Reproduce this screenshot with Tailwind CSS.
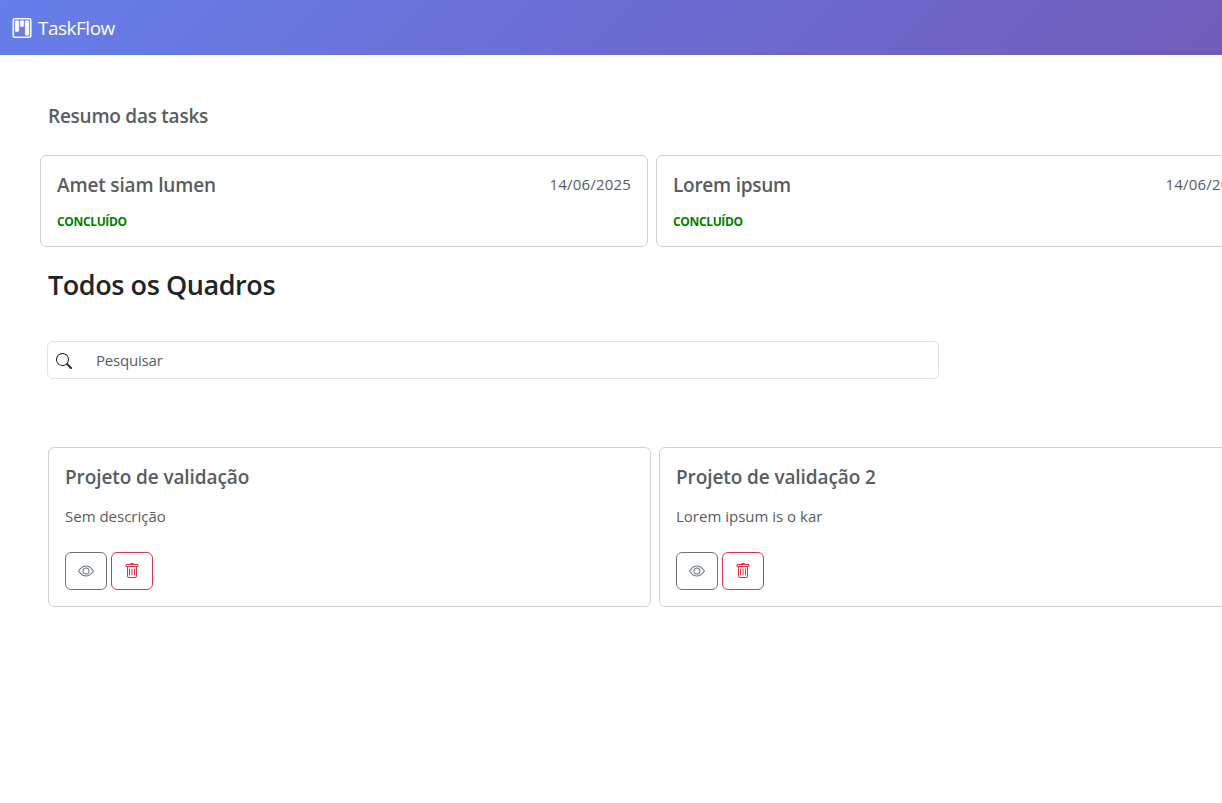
<!DOCTYPE html>
<html lang="pt-BR">
<head>
<meta charset="utf-8">
<title>TaskFlow</title>
<script src="https://cdn.jsdelivr.net/npm/@tailwindcss/browser@4"></script>
</head>
<body class="h-[803px] overflow-hidden bg-white font-['Segoe_UI','Open_Sans','Noto_Sans',sans-serif] text-[15px] leading-6 text-[#585c5e]">
<svg class="hidden">
  <symbol id="eye" viewBox="0 0 16 16"><path d="M16 8s-3-5.500-8-5.500S0 8 0 8s3 5.500 8 5.500S16 8 16 8M1.173 8a13 13 0 0 1 1.660-2.043C4.120 4.668 5.880 3.500 8 3.500s3.879 1.168 5.168 2.457A13 13 0 0 1 14.828 8q-.086.130-.195.288c-.335.480-.830 1.120-1.465 1.755C11.879 11.332 10.119 12.500 8 12.500s-3.879-1.168-5.168-2.457A13 13 0 0 1 1.172 8z"/><path d="M8 5.500a2.500 2.500 0 1 0 0 5 2.500 2.500 0 0 0 0-5M4.500 8a3.500 3.500 0 1 1 7 0 3.500 3.500 0 0 1-7 0"/></symbol>
  <symbol id="trash" viewBox="0 0 16 16"><path d="M5.500 5.500A.5.5 0 0 1 6 6v6a.5.5 0 0 1-1 0V6a.5.5 0 0 1 .5-.5m2.500 0a.5.5 0 0 1 .5.5v6a.5.5 0 0 1-1 0V6a.5.5 0 0 1 .5-.5m3 .5a.5.5 0 0 0-1 0v6a.5.5 0 0 0 1 0z"/><path d="M14.500 3a1 1 0 0 1-1 1H13v9a2 2 0 0 1-2 2H5a2 2 0 0 1-2-2V4h-.5a1 1 0 0 1-1-1V2a1 1 0 0 1 1-1H6a1 1 0 0 1 1-1h2a1 1 0 0 1 1 1h3.500a1 1 0 0 1 1 1zM4.118 4 4 4.059V13a1 1 0 0 0 1 1h6a1 1 0 0 0 1-1V4.059L11.882 4zM2.500 3h11V2h-11z"/></symbol>
</svg>
<header class="flex h-[55px] w-[1860px] items-center gap-1.5 bg-linear-[135deg,#667eea,#764ba2] px-3 text-white">
  <svg class="size-5 stroke-white stroke-[0.25]" viewBox="0 0 16 16" fill="currentColor"><path d="M13.5 1a1 1 0 0 1 1 1v12a1 1 0 0 1-1 1h-11a1 1 0 0 1-1-1V2a1 1 0 0 1 1-1zm-11-1a2 2 0 0 0-2 2v12a2 2 0 0 0 2 2h11a2 2 0 0 0 2-2V2a2 2 0 0 0-2-2z"/><path d="M6.5 3a1 1 0 0 1 1-1h1a1 1 0 0 1 1 1v3a1 1 0 0 1-1 1h-1a1 1 0 0 1-1-1zm-4 0a1 1 0 0 1 1-1h1a1 1 0 0 1 1 1v7a1 1 0 0 1-1 1h-1a1 1 0 0 1-1-1zm8 0a1 1 0 0 1 1-1h1a1 1 0 0 1 1 1v10a1 1 0 0 1-1 1h-1a1 1 0 0 1-1-1z"/></svg>
  <span class="text-[19px] tracking-[-0.5px]">TaskFlow</span>
</header>
<main class="w-[1860px] pt-[49px]">
  <h2 class="pl-12 text-[19px] font-semibold tracking-[-0.25px]">Resumo das tasks</h2>
  <section class="mt-[27px] flex gap-2 pl-10">
    <article class="h-[92px] w-[608px] rounded-md border border-[#d2d2d2] px-4 pt-[17px]">
      <div class="flex justify-between"><h3 class="text-[19px] font-semibold tracking-[-0.15px]">Amet siam lumen</h3><span class="-mt-px tracking-[0.18px]">14/06/2025</span></div>
      <p class="mt-[13px] text-[12px] font-bold tracking-[-0.35px] text-[#008000]">CONCLUÍDO</p>
    </article>
    <article class="h-[92px] w-[608px] rounded-md border border-[#d2d2d2] px-4 pt-[17px]">
      <div class="flex justify-between"><h3 class="text-[19px] font-semibold tracking-[-0.25px]">Lorem ipsum</h3><span class="-mt-px tracking-[0.18px]">14/06/2025</span></div>
      <p class="mt-[13px] text-[12px] font-bold tracking-[-0.35px] text-[#008000]">CONCLUÍDO</p>
    </article>
  </section>
  <h1 class="mt-[21px] pl-12 text-[27px] leading-[34px] font-semibold tracking-[-0.43px] text-[#212529]">Todos os Quadros</h1>
  <div class="mt-[39px] ml-[47px] flex h-[38px] w-[892px] items-center gap-6 rounded-md border border-[#dee2e6] pl-2">
    <svg class="mt-0.5 size-4 text-[#212529]" viewBox="0 0 16 16" fill="currentColor"><path d="M11.742 10.344a6.500 6.500 0 1 0-1.397 1.398h-.001q.044.060.098.115l3.850 3.850a1 1 0 0 0 1.415-1.414l-3.850-3.850a1 1 0 0 0-.115-.100zM12 6.500a5.500 5.500 0 1 1-11 0 5.500 5.500 0 0 1 11 0"/></svg>
    <span class="tracking-[-0.2px]">Pesquisar</span>
  </div>
  <section class="mt-[68px] flex gap-2 pl-12">
    <article class="h-40 w-[603px] rounded-md border border-[#d2d2d2] px-4 pt-[17px]">
      <h3 class="text-[19px] font-semibold tracking-[-0.1px]">Projeto de validação</h3>
      <p class="mt-[15px]">Sem descrição</p>
      <div class="mt-6 flex gap-1">
        <button class="flex h-[38px] w-[42px] items-center justify-center rounded-md border border-[#6c757d] text-[#6c757d]"><svg class="size-4 fill-current"><use href="#eye"/></svg></button>
        <button class="flex h-[38px] w-[42px] items-center justify-center rounded-md border border-[#dc3545] text-[#dc3545]"><svg class="size-4 fill-current"><use href="#trash"/></svg></button>
      </div>
    </article>
    <article class="h-40 w-[603px] rounded-md border border-[#d2d2d2] px-4 pt-[17px]">
      <h3 class="text-[19px] font-semibold tracking-[-0.1px]">Projeto de validação 2</h3>
      <p class="mt-[15px]">Lorem ipsum is o kar</p>
      <div class="mt-6 flex gap-1">
        <button class="flex h-[38px] w-[42px] items-center justify-center rounded-md border border-[#6c757d] text-[#6c757d]"><svg class="size-4 fill-current"><use href="#eye"/></svg></button>
        <button class="flex h-[38px] w-[42px] items-center justify-center rounded-md border border-[#dc3545] text-[#dc3545]"><svg class="size-4 fill-current"><use href="#trash"/></svg></button>
      </div>
    </article>
  </section>
</main>
</body>
</html>
